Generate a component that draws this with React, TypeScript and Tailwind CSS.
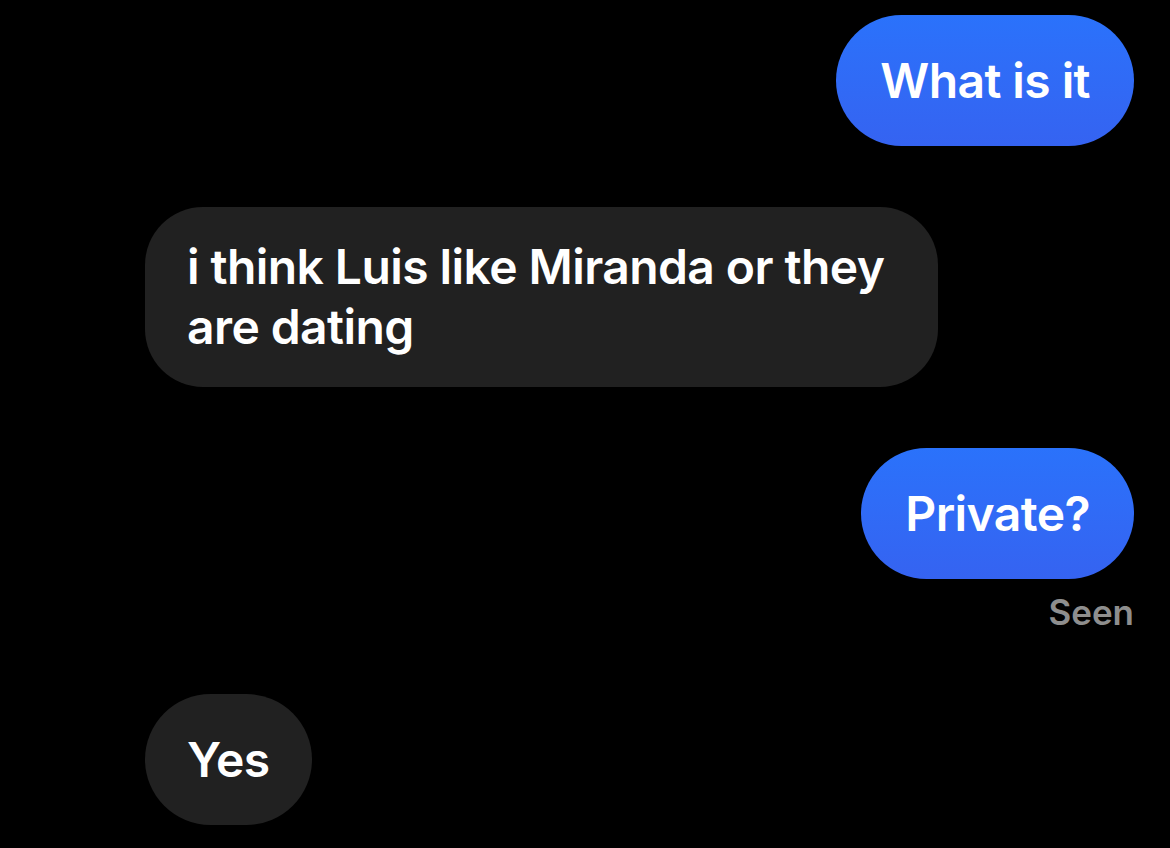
export default function App() {
  return (
    <div
      className="min-h-[848px] w-full bg-black pl-[145px] pr-[36px] pt-[15px] text-white antialiased"
      style={{ fontFamily: "Inter, 'Noto Sans', sans-serif" }}
    >
      <div className="flex flex-col">
        {/* outgoing */}
        <div className="flex justify-end">
          <div className="flex h-[131px] items-center rounded-full bg-gradient-to-b from-[#2a72fb] to-[#3563f1] px-[44px] text-[48px] font-semibold leading-[60px] tracking-[-0.012em]">
            What is it
          </div>
        </div>

        {/* incoming */}
        <div className="mt-[61px] flex justify-start">
          <div className="w-[793px] rounded-[58px] bg-[#212121] px-[42px] py-[30px] text-[48px] font-semibold leading-[60px] tracking-[-0.012em]">
            i think Luis like Miranda or they are dating
          </div>
        </div>

        {/* outgoing */}
        <div className="mt-[61px] flex flex-col items-end">
          <div className="flex h-[131px] items-center rounded-full bg-gradient-to-b from-[#2a72fb] to-[#3563f1] px-[44px] text-[48px] font-semibold leading-[60px] tracking-[-0.012em]">
            Private?
          </div>
          <span className="mt-[12px] text-[35px] font-semibold leading-[42px] text-[#8e8e8e]">
            Seen
          </span>
        </div>

        {/* incoming */}
        <div className="mt-[61px] flex justify-start">
          <div className="flex h-[131px] items-center rounded-full bg-[#212121] px-[42px] text-[48px] font-semibold leading-[60px] tracking-[-0.012em]">
            Yes
          </div>
        </div>
      </div>
    </div>
  );
}
